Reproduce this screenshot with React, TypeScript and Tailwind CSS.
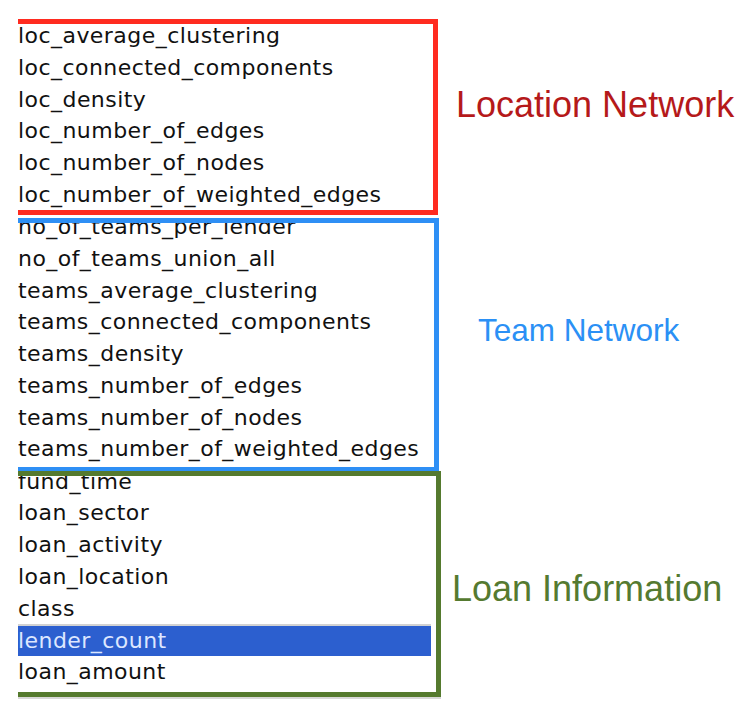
const LOCATION = [
  'loc_average_clustering',
  'loc_connected_components',
  'loc_density',
  'loc_number_of_edges',
  'loc_number_of_nodes',
  'loc_number_of_weighted_edges',
];

const TEAM = [
  'no_of_teams_per_lender',
  'no_of_teams_union_all',
  'teams_average_clustering',
  'teams_connected_components',
  'teams_density',
  'teams_number_of_edges',
  'teams_number_of_nodes',
  'teams_number_of_weighted_edges',
];

const LOAN = ['fund_time', 'loan_sector', 'loan_activity', 'loan_location', 'class', 'lender_count', 'loan_amount'];

function Row({ name, selected }: { name: string; selected?: boolean }) {
  if (selected) {
    return (
      <div className="h-[31.75px] leading-[30px] mr-[5px] border-t-2 border-[#d2d2d2] bg-[#2c5fcf] text-[#dde7ff] whitespace-nowrap">
        {name}
      </div>
    );
  }
  return <div className="h-[31.75px] leading-[31.75px] text-[#111] whitespace-nowrap">{name}</div>;
}

export default function App() {
  return (
    <div className="w-[742px] h-[720px] bg-white overflow-hidden">
      <div className="pt-[19px] pl-[18px] flex flex-col">
        {/* Location network */}
        <div className="flex items-start">
          <div className="w-[420px] h-[196px] shrink-0 border-y-[5px] border-r-[5px] border-[#ff2b20] overflow-hidden font-['DejaVu_Sans',sans-serif] text-[22px] tracking-[0.45px]">
            <div className="-mt-[4px]">
              {LOCATION.map((n) => (
                <Row key={n} name={n} />
              ))}
            </div>
          </div>
          <div className="pl-[18px] mt-[68px] font-['Liberation_Sans',Arial,sans-serif] text-[36px] leading-none text-[#b5191a] whitespace-nowrap">
            Location Network
          </div>
        </div>

        {/* Team network */}
        <div className="flex items-start mt-[3px]">
          <div className="w-[421px] h-[254px] shrink-0 border-y-[5px] border-r-[5px] border-[#2e8ff5] overflow-hidden font-['DejaVu_Sans',sans-serif] text-[22px] tracking-[0.45px]">
            <div className="-mt-[12px]">
              {TEAM.map((n) => (
                <Row key={n} name={n} />
              ))}
            </div>
          </div>
          <div className="pl-[39px] mt-[97px] font-['Liberation_Sans',Arial,sans-serif] text-[31.5px] leading-none text-[#2b90f5] whitespace-nowrap">
            Team Network
          </div>
        </div>

        {/* Loan information */}
        <div className="flex items-start -mt-[1px]">
          <div className="w-[423px] h-[226px] shrink-0 border-y-[5px] border-r-[5px] border-[#557a2e] overflow-hidden font-['DejaVu_Sans',sans-serif] text-[22px] tracking-[0.45px]">
            <div className="-mt-[10.5px]">
              {LOAN.map((n) => (
                <Row key={n} name={n} selected={n === 'lender_count'} />
              ))}
            </div>
          </div>
          <div className="pl-[11px] mt-[100px] font-['Liberation_Sans',Arial,sans-serif] text-[36px] leading-none text-[#557a30] whitespace-nowrap">
            Loan Information
          </div>
        </div>
        <div className="w-[423px] h-[2px] bg-[#d8d8d8]" />
      </div>
    </div>
  );
}
